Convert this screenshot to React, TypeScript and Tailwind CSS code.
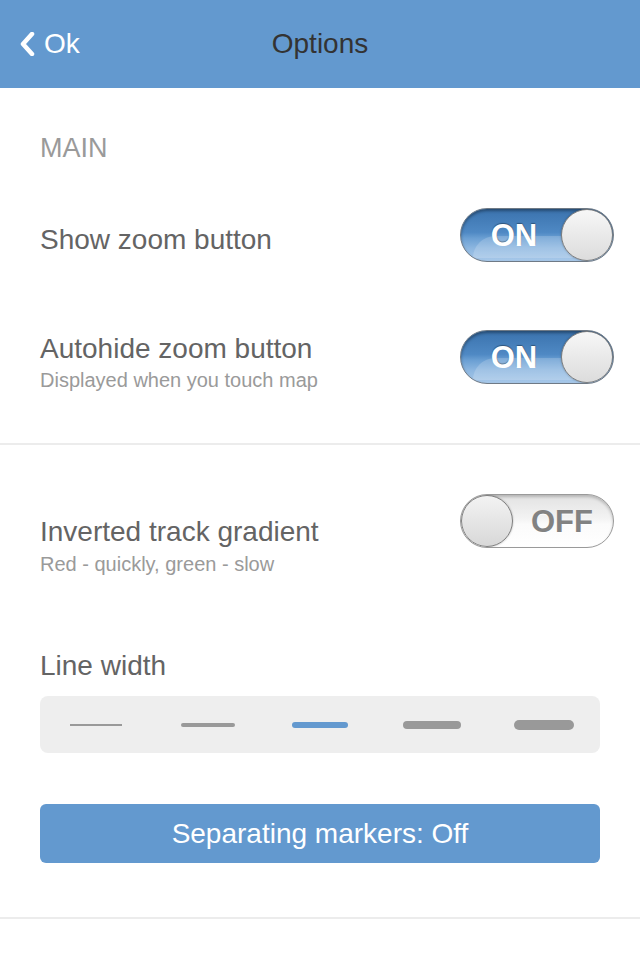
import React from "react";

function Toggle({ on }: { on: boolean }) {
  if (on) {
    return (
      <div className="relative w-[154px] h-[54px] shrink-0 rounded-full border border-[#6f7a86] overflow-hidden bg-[linear-gradient(to_bottom,#3a72ad_0%,#4f89c4_45%,#6a9fd3_56%,#8cb6e0_75%,#a7c8e9_100%)] shadow-[inset_0_2px_3px_rgba(0,0,0,0.35)]">
        <div className="absolute left-[12px] right-[40px] top-[27px] bottom-[3px] rounded-tl-[22px] bg-[rgba(255,255,255,0.18)]" />
        <div className="absolute left-0 top-0 h-full w-[106px] flex items-center justify-center">
          <span className="text-white font-bold text-[31px] leading-none [text-shadow:0_-1px_1px_rgba(0,0,0,0.35)]">
            ON
          </span>
        </div>
        <div className="absolute right-0 top-0 w-[52px] h-[52px] rounded-full border border-[#7d7d7d] bg-[linear-gradient(to_bottom,#f7f7f7,#dcdcdc)] shadow-[0_0_2px_rgba(0,0,0,0.3)]" />
      </div>
    );
  }
  return (
    <div className="relative w-[154px] h-[54px] shrink-0 rounded-full border border-[#9a9a9a] overflow-hidden bg-[linear-gradient(to_bottom,#e2e2e2_0%,#f3f3f3_45%,#fbfbfb_56%,#ffffff_100%)] shadow-[inset_0_2px_3px_rgba(0,0,0,0.2)]">
      <div className="absolute left-[50px] top-0 h-full right-0 flex items-center justify-center">
        <span className="text-[#828282] font-bold text-[31px] leading-none [text-shadow:0_1px_0_rgba(255,255,255,0.8)]">
          OFF
        </span>
      </div>
      <div className="absolute left-0 top-0 w-[52px] h-[52px] rounded-full border border-[#7d7d7d] bg-[linear-gradient(to_bottom,#f3f3f3,#d8d8d8)] shadow-[0_0_2px_rgba(0,0,0,0.3)]" />
    </div>
  );
}

export default function App() {
  const lines = [
    { w: 52, h: 2, c: "#999999", r: "rounded-none" },
    { w: 54, h: 4, c: "#999999", r: "rounded-full" },
    { w: 56, h: 6, c: "#6399cf", r: "rounded-full" },
    { w: 58, h: 8, c: "#999999", r: "rounded-full" },
    { w: 60, h: 10, c: "#999999", r: "rounded-full" },
  ];
  return (
    <div
      className="w-[640px] h-[960px] bg-white overflow-hidden"
      style={{ fontFamily: '"Liberation Sans", Arial, sans-serif' }}
    >
      {/* Header */}
      <div className="h-[88px] bg-[#6399cf] grid grid-cols-[1fr_auto_1fr] items-center">
        <div className="flex items-center pl-[20px] gap-[9px]">
          <svg width="15" height="24" viewBox="0 0 15 24" className="mt-[-1px]">
            <polyline
              points="12,2 3,12 12,22"
              fill="none"
              stroke="#ffffff"
              strokeWidth="4.5"
              strokeLinecap="round"
              strokeLinejoin="round"
            />
          </svg>
          <span className="text-white text-[28px] leading-none">Ok</span>
        </div>
        <div className="text-[#333333] text-[28px] leading-none">Options</div>
        <div />
      </div>

      {/* Section 1 */}
      <div className="px-[40px] pt-[44px] pb-[51px]">
        <div className="text-[#9a9a9a] text-[27px] leading-[32px]">MAIN</div>
        <div className="mt-[44px] flex justify-between items-start">
          <div className="mt-[16px] text-[#646464] text-[28px] leading-[32px]">
            Show zoom button
          </div>
          <div className="mr-[-14px]">
            <Toggle on />
          </div>
        </div>
        <div className="mt-[68px] flex justify-between items-start">
          <div className="mt-[3px]">
            <div className="text-[#646464] text-[28px] leading-[32px]">
              Autohide zoom button
            </div>
            <div className="mt-[3px] text-[#9a9a9a] text-[20px] leading-[24px]">
              Displayed when you touch map
            </div>
          </div>
          <div className="mr-[-14px]">
            <Toggle on />
          </div>
        </div>
      </div>
      <div className="h-[2px] bg-[#ececec]" />

      {/* Section 2 */}
      <div className="px-[40px] pt-[49px] pb-[54px]">
        <div className="flex justify-between items-start">
          <div className="mt-[22px]">
            <div className="text-[#646464] text-[28px] leading-[32px]">
              Inverted track gradient
            </div>
            <div className="mt-[4px] text-[#9a9a9a] text-[20px] leading-[24px]">
              Red - quickly, green - slow
            </div>
          </div>
          <div className="mr-[-14px]">
            <Toggle on={false} />
          </div>
        </div>
        <div className="mt-[74px] text-[#646464] text-[28px] leading-[32px]">
          Line width
        </div>
        <div className="mt-[14px] h-[57px] rounded-[8px] bg-[#eeeeee] grid grid-cols-5 items-center">
          {lines.map((l, i) => (
            <div key={i} className="flex justify-center items-center">
              <div
                className={l.r}
                style={{ width: l.w, height: l.h, backgroundColor: l.c }}
              />
            </div>
          ))}
        </div>
        <div className="mt-[51px] h-[59px] rounded-[6px] bg-[#6399cf] flex items-center justify-center">
          <span className="text-white text-[28px] leading-none">
            Separating markers: Off
          </span>
        </div>
      </div>
      <div className="h-[2px] bg-[#ececec]" />
    </div>
  );
}
